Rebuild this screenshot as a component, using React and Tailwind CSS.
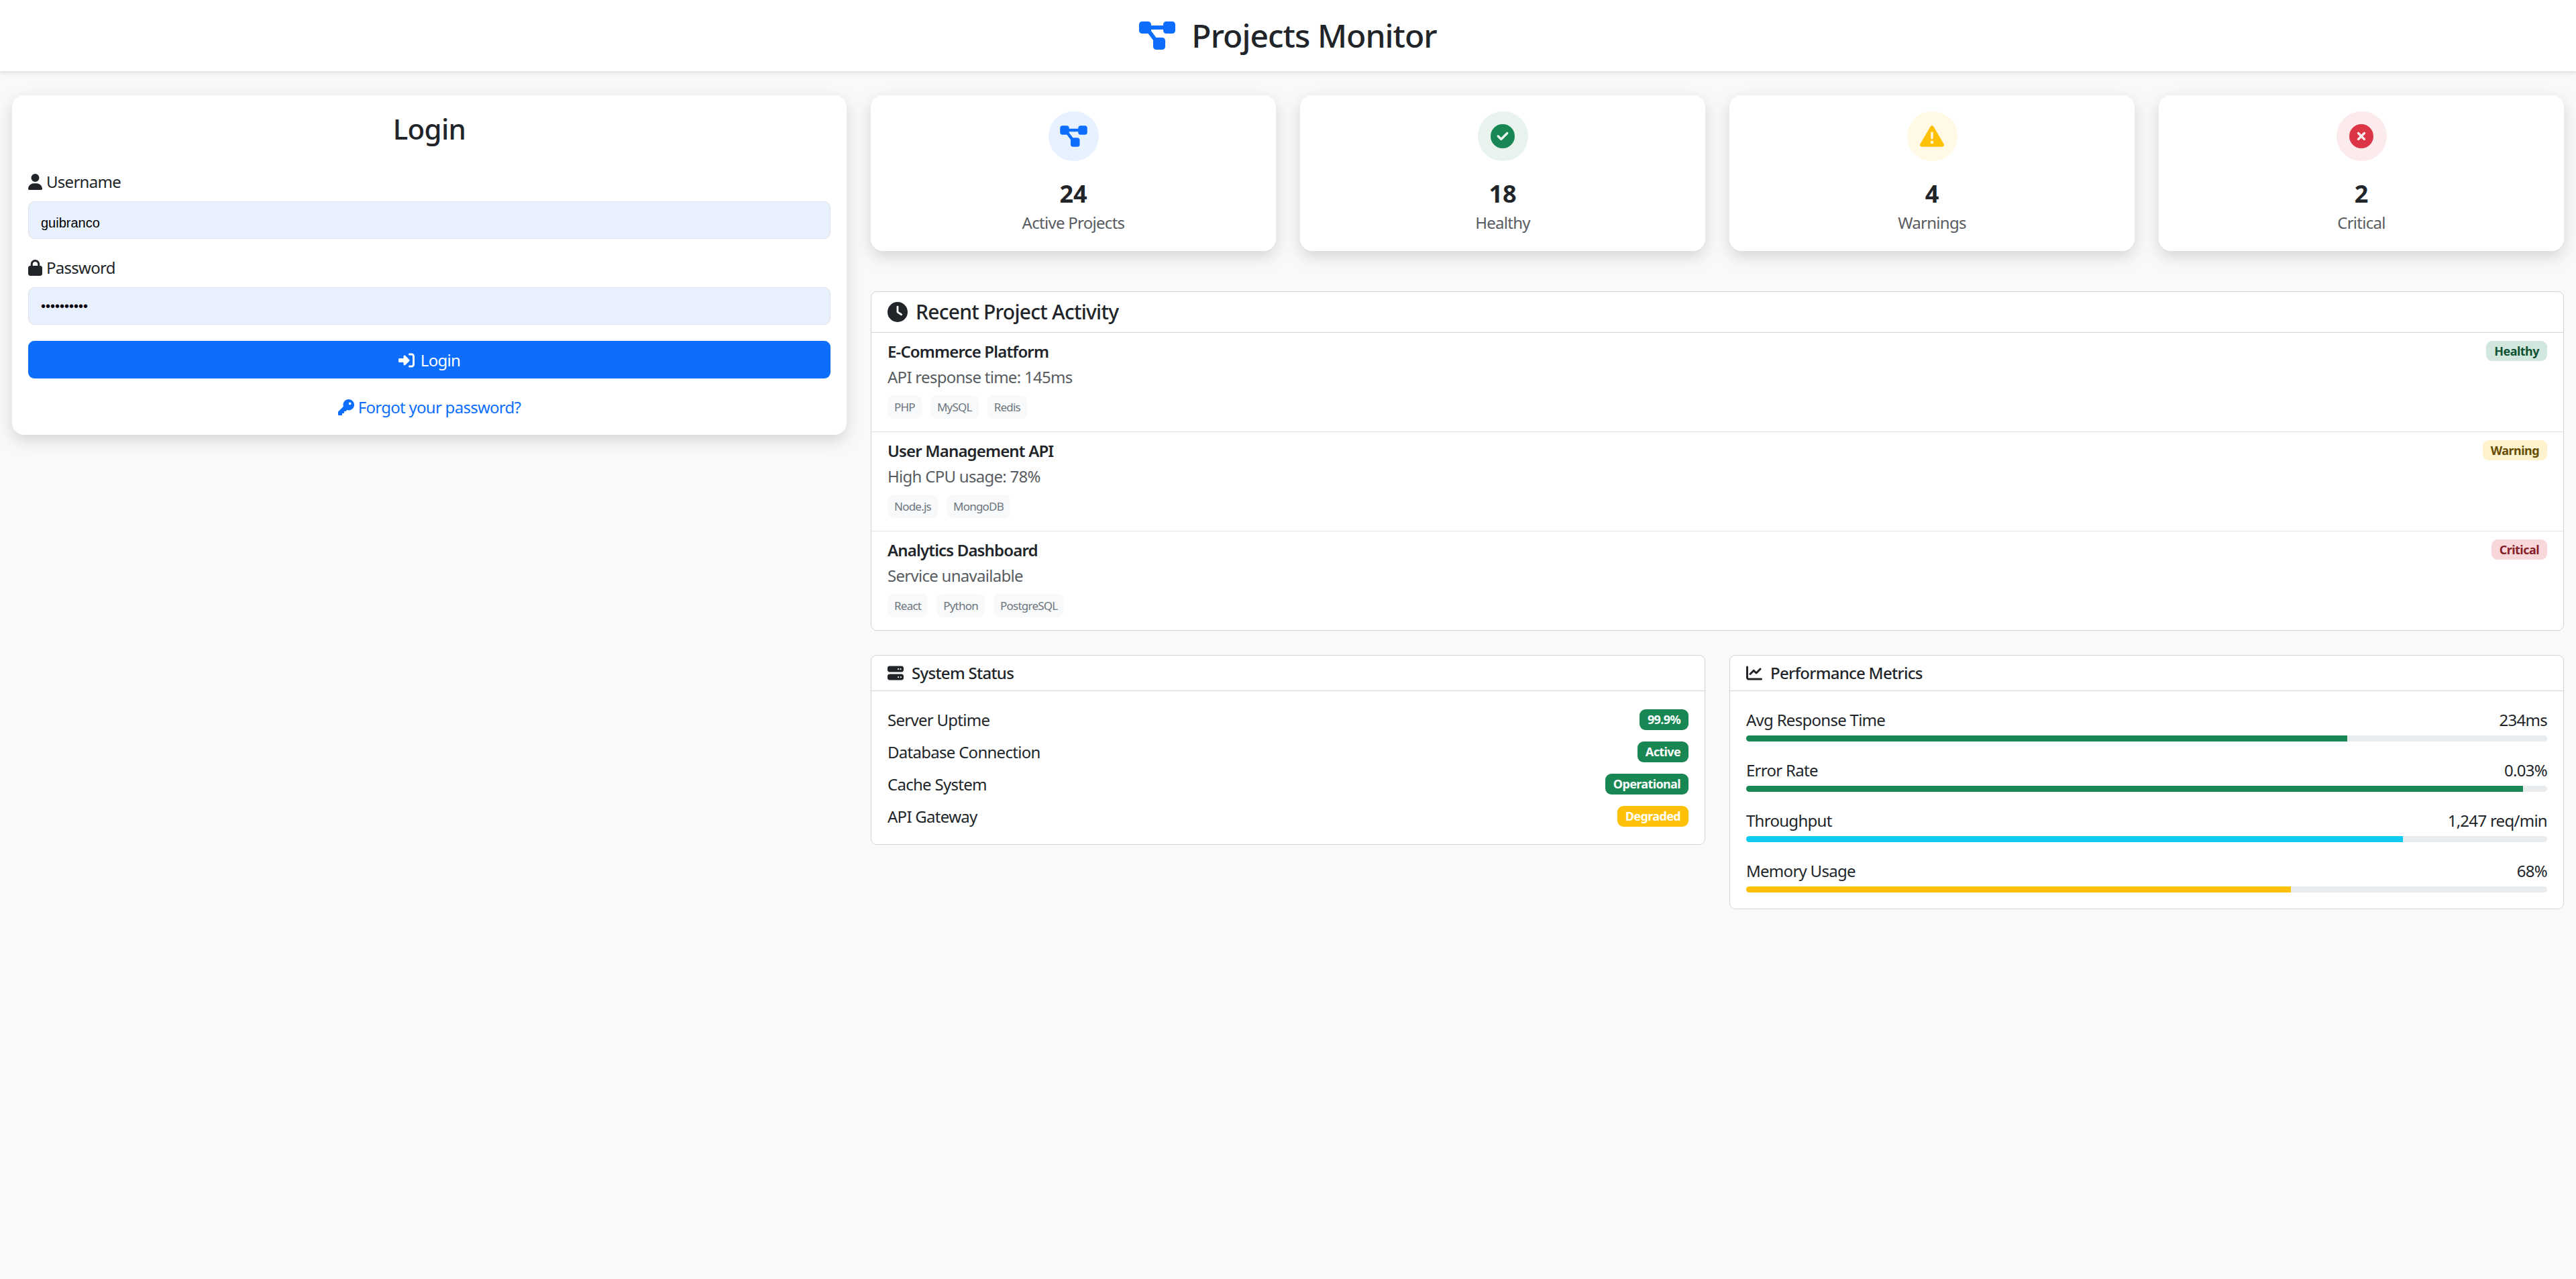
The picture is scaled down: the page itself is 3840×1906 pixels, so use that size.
import {
  FaChartLine,
  FaCircleCheck,
  FaCircleXmark,
  FaClock,
  FaDiagramProject,
  FaKey,
  FaLock,
  FaRightToBracket,
  FaServer,
  FaTriangleExclamation,
  FaUser,
} from "react-icons/fa6";

const stats = [
  { value: "24", label: "Active Projects", icon: FaDiagramProject, circle: "bg-[#e7f1ff]", color: "text-[#0d6efd]", size: "w-[41px] h-[36px]" },
  { value: "18", label: "Healthy", icon: FaCircleCheck, circle: "bg-[#e8f3ee]", color: "text-[#198754]", size: "w-[36px] h-[36px]" },
  { value: "4", label: "Warnings", icon: FaTriangleExclamation, circle: "bg-[#fff9e6]", color: "text-[#ffc107]", size: "w-[36px] h-[36px]" },
  { value: "2", label: "Critical", icon: FaCircleXmark, circle: "bg-[#fcebec]", color: "text-[#dc3545]", size: "w-[36px] h-[36px]" },
];

const activity = [
  { name: "E-Commerce Platform", detail: "API response time: 145ms", tags: ["PHP", "MySQL", "Redis"], status: "Healthy", badge: "bg-[#d1e7dd] text-[#0f5132]" },
  { name: "User Management API", detail: "High CPU usage: 78%", tags: ["Node.js", "MongoDB"], status: "Warning", badge: "bg-[#fff3cd] text-[#664d03]" },
  { name: "Analytics Dashboard", detail: "Service unavailable", tags: ["React", "Python", "PostgreSQL"], status: "Critical", badge: "bg-[#f8d7da] text-[#842029]" },
];

const systems = [
  { name: "Server Uptime", value: "99.9%", badge: "bg-[#198754]" },
  { name: "Database Connection", value: "Active", badge: "bg-[#198754]" },
  { name: "Cache System", value: "Operational", badge: "bg-[#198754]" },
  { name: "API Gateway", value: "Degraded", badge: "bg-[#ffc107]" },
];

const metrics = [
  { name: "Avg Response Time", value: "234ms", bar: "bg-[#198754]", width: "75%" },
  { name: "Error Rate", value: "0.03%", bar: "bg-[#198754]", width: "97%" },
  { name: "Throughput", value: "1,247 req/min", bar: "bg-[#0dcaf0]", width: "82%" },
  { name: "Memory Usage", value: "68%", bar: "bg-[#ffc107]", width: "68%" },
];

function Field({ icon: Icon, iconClass, label, type, value, inputClass }) {
  return (
    <div className="mb-[24px]">
      <label className="mb-[12px] flex h-[36px] items-center gap-[6px] pt-[2px] tracking-[-0.03em]">
        <Icon className={iconClass} />
        {label}
      </label>
      <input
        type={type}
        value={value}
        readOnly
        className={`block h-[56px] w-full rounded-[9px] border border-[#dee2e6] bg-[#e8f0fe] px-[18px] font-['Liberation_Sans',sans-serif] text-[20px] text-black outline-none ${inputClass}`}
      />
    </div>
  );
}

function Panel({ icon: Icon, iconClass, title, children }) {
  return (
    <section className="rounded-[9px] border border-[#d4d5d6] bg-white">
      <h6 className="flex h-[53px] items-center gap-[12px] border-b border-[#d4d5d6] px-[24px] text-[24px] font-medium tracking-[-0.03em]">
        <Icon className={iconClass} />
        {title}
      </h6>
      <div className="p-[24px]">{children}</div>
    </section>
  );
}

export default function App() {
  return (
    <div className="min-h-screen bg-[#f8f9fa] font-['Noto_Sans','Open_Sans',sans-serif] text-[24px] leading-[36px] text-[#212529]">
      <header className="flex h-[106px] items-center justify-center gap-[24px] bg-white shadow-[0_3px_6px_rgba(0,0,0,0.1)]">
        <FaDiagramProject className="h-[48px] w-[54px] text-[#0d6efd]" />
        <h1 className="text-[48px] leading-[58px] font-medium tracking-[-0.02em]">Projects Monitor</h1>
      </header>

      <main className="grid grid-cols-[1244px_1fr] items-start gap-[36px] px-[18px] pt-[36px]">
        <form className="rounded-[18px] bg-white p-[24px] shadow-[0_8px_24px_rgba(0,0,0,0.15)]">
          <h3 className="mb-[36px] pt-[2px] text-center text-[42px] leading-[48px] font-medium tracking-[-0.015em]">Login</h3>
          <Field icon={FaUser} iconClass="h-[24px] w-[21px]" label="Username" type="text" value="guibranco" inputClass="pt-[8px]" />
          <Field icon={FaLock} iconClass="h-[24px] w-[21px]" label="Password" type="password" value="0123456789" inputClass="pt-0" />
          <button
            type="button"
            className="flex h-[56px] w-full items-center justify-center gap-[9px] rounded-[9px] bg-[#0d6efd] pt-[2px] tracking-[-0.03em] text-white"
          >
            <FaRightToBracket className="h-[24px] w-[24px]" />
            Login
          </button>
          <a className="mt-[24px] flex h-[36px] items-center justify-center gap-[6px] pt-[2px] tracking-[-0.03em] text-[#0d6efd]">
            <FaKey className="h-[24px] w-[24px]" />
            Forgot your password?
          </a>
        </form>

        <div>
          <div className="mb-[60px] grid grid-cols-4 gap-[36px]">
            {stats.map(({ value, label, icon: Icon, circle, color, size }) => (
              <div key={label} className="flex h-[232px] flex-col items-center rounded-[18px] bg-white p-[24px] shadow-[0_8px_24px_rgba(0,0,0,0.15)]">
                <div className={`mb-[24px] flex h-[75px] w-[75px] items-center justify-center rounded-full ${circle} ${color}`}>
                  <Icon className={size} />
                </div>
                <h3 className="mb-[3px] pt-[3px] text-[36px] leading-[43px] font-bold">{value}</h3>
                <p className="pt-[1px] tracking-[-0.03em] text-[#595c5f]">{label}</p>
              </div>
            ))}
          </div>

          <section className="mb-[36px] rounded-[9px] border border-[#d4d5d6] bg-white">
            <h5 className="flex h-[61px] items-center gap-[12px] border-b border-[#d4d5d6] px-[24px] text-[30px] font-medium tracking-[-0.025em]">
              <FaClock className="h-[30px] w-[30px]" />
              Recent Project Activity
            </h5>
            {activity.map(({ name, detail, tags, status, badge }, i) => (
              <div key={name} className={`px-[24px] pt-[12px] pb-[19px] ${i < 2 ? "border-b border-[#e3e4e5]" : ""}`}>
                <div className="mb-[6px] flex h-[30px] items-center justify-between">
                  <h6 className="text-[24px] leading-[29px] font-semibold tracking-[-0.035em]">{name}</h6>
                  <span className={`rounded-[9px] px-[12px] text-[18px] leading-[30px] font-bold tracking-[-0.03em] ${badge}`}>{status}</span>
                </div>
                <p className="mb-[9px] tracking-[-0.03em] text-[#595c5f]">{detail}</p>
                <div className="flex gap-[13px]">
                  {tags.map((tag) => (
                    <span key={tag} className="h-[35px] rounded-[9px] bg-[#f8f9fa] px-[10px] text-[17px] leading-[35px] tracking-[-0.045em] text-[#6c757d]">
                      {tag}
                    </span>
                  ))}
                </div>
              </div>
            ))}
          </section>

          <div className="grid grid-cols-2 items-start gap-[36px]">
            <Panel icon={FaServer} iconClass="h-[24px] w-[24px]" title="System Status">
              <div className="flex flex-col gap-[12px]">
                {systems.map(({ name, value, badge }) => (
                  <div key={name} className="flex h-[36px] items-center justify-between pt-[1px] tracking-[-0.03em]">
                    {name}
                    <span className={`rounded-[9px] px-[12px] text-[18px] leading-[31px] font-bold tracking-[-0.035em] text-white ${badge}`}>{value}</span>
                  </div>
                ))}
              </div>
            </Panel>

            <Panel icon={FaChartLine} iconClass="h-[24px] w-[24px]" title="Performance Metrics">
              <div className="flex flex-col gap-[24px]">
                {metrics.map(({ name, value, bar, width }) => (
                  <div key={name}>
                    <div className="mb-[6px] flex h-[36px] items-center justify-between pt-[1px] tracking-[-0.03em]">
                      <span>{name}</span>
                      <span>{value}</span>
                    </div>
                    <div className="h-[9px] overflow-hidden rounded-[6px] bg-[#e9ecef]">
                      <div className={`h-full ${bar}`} style={{ width }} />
                    </div>
                  </div>
                ))}
              </div>
            </Panel>
          </div>
        </div>
      </main>
    </div>
  );
}
